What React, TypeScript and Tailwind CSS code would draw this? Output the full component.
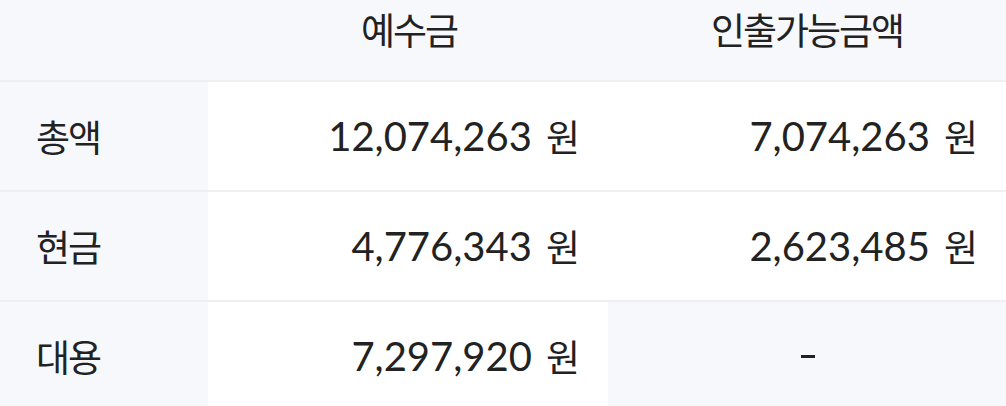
import React from "react";

const Ko = ({ children }: { children: React.ReactNode }) => (
  <span className="text-[37px] tracking-[-2px] font-['Noto_Sans_CJK_KR',sans-serif]">{children}</span>
);

export default function App() {
  const rows = [
    { label: "총액", a: "12,074,263", b: "7,074,263" },
    { label: "현금", a: "4,776,343", b: "2,623,485" },
    { label: "대용", a: "7,297,920", b: null },
  ];
  return (
    <div className="w-[1006px] h-[406px] overflow-hidden bg-white text-[#222222] text-[40px] leading-none font-['Lato','Noto_Sans_CJK_KR',sans-serif]">
      <div className="grid grid-cols-[208px_400px_398px] h-[80px] bg-[#f7f8fc] border-b-2 border-[#eeeff1] box-content">
        <div />
        <div className="flex items-center justify-center pb-[22px] pl-[2px]">
          <Ko>예수금</Ko>
        </div>
        <div className="flex items-center justify-center pb-[22px]">
          <Ko>인출가능금액</Ko>
        </div>
      </div>
      {rows.map((r, i) => (
        <div
          key={i}
          className={
            "grid grid-cols-[208px_400px_398px] h-[108px] " +
            (i < rows.length - 1 ? "border-b-2 border-[#eeeff1] box-content" : "")
          }
        >
          <div className="bg-[#f7f8fc] flex items-center pl-[36px]">
            <Ko>{r.label}</Ko>
          </div>
          <div className="bg-white flex items-center justify-end pr-[28px]">
            <span>{r.a}</span>
            <span className="ml-[14px] text-[37px] font-['Noto_Sans_CJK_KR',sans-serif]">원</span>
          </div>
          {r.b ? (
            <div className="bg-white flex items-center justify-end pr-[28px]">
              <span>{r.b}</span>
              <span className="ml-[14px] text-[37px] font-['Noto_Sans_CJK_KR',sans-serif]">원</span>
            </div>
          ) : (
            <div className="bg-[#f7f8fc] flex items-center justify-center">
              <span className="inline-block w-[14px] h-[3px] bg-[#222222] translate-x-[1px]" aria-label="-" />
            </div>
          )}
        </div>
      ))}
    </div>
  );
}
